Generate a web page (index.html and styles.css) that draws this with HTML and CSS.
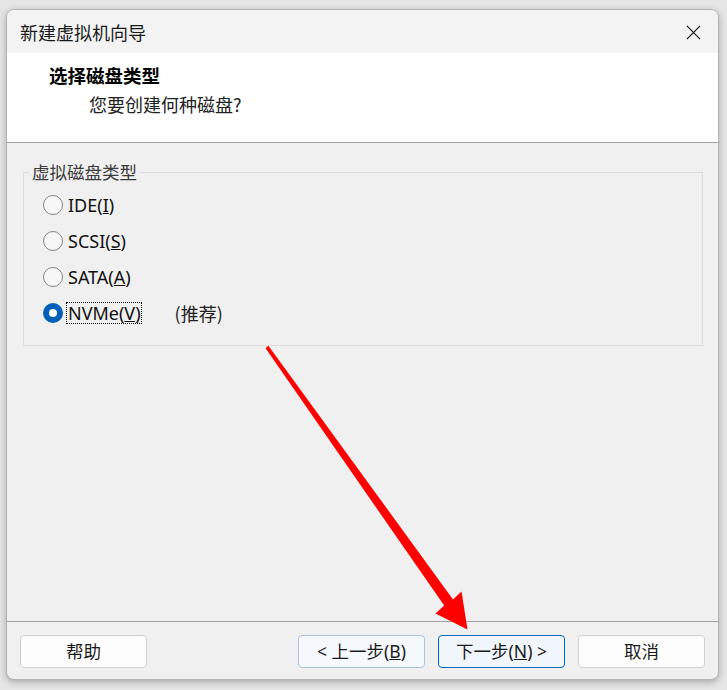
FILE: index.html
```html
<!DOCTYPE html>
<html lang="zh-CN">
<head>
<meta charset="utf-8">
<title>新建虚拟机向导</title>
<link rel="stylesheet" href="styles.css">
</head>
<body>
<div class="window">
  <div class="titlebar">
    <span class="title">新建虚拟机向导</span>
    <svg class="close" width="16" height="16" viewBox="0 0 16 16"><path d="M1 1 L15 15 M15 1 L1 15" stroke="#1a1a1a" stroke-width="1.3" fill="none"/></svg>
  </div>
  <div class="header">
    <div class="h-title">选择磁盘类型</div>
    <div class="h-sub">您要创建何种磁盘?</div>
  </div>
  <div class="main">
    <fieldset class="group">
      <legend>虚拟磁盘类型</legend>
      <div class="row"><span class="radio"></span><span class="lbl">IDE(<u>I</u>)</span></div>
      <div class="row"><span class="radio"></span><span class="lbl">SCSI(<u>S</u>)</span></div>
      <div class="row"><span class="radio"></span><span class="lbl">SATA(<u>A</u>)</span></div>
      <div class="row"><span class="radio checked"></span><span class="lbl focus">NVMe(<u>V</u>)</span><span class="rec">(推荐)</span></div>
    </fieldset>
  </div>
  <div class="footer">
    <button class="btn">帮助</button>
    <span class="spacer"></span>
    <button class="btn back">&lt; 上一步(<u>B</u>)</button>
    <button class="btn next">下一步(<u>N</u>) &gt;</button>
    <button class="btn">取消</button>
  </div>
  <svg class="arrow" width="727" height="690" viewBox="0 0 727 690">
    <polygon points="265.6,348.3 268.4,345.7 453,599.4 461.5,591.5 467.5,629.5 435.5,613.5 444.2,605.6" fill="#ff0000"/>
  </svg>
</div>
</body>
</html>
```
FILE: styles.css
```css
html, body {
  margin: 0;
  padding: 0;
}
body {
  background: #e6e6e6;
  width: 727px;
  height: 690px;
  font-family: "Noto Sans", "Noto Sans CJK SC", sans-serif;
  color: #1a1a1a;
}
.window {
  margin: 9px 0 0 6px;
  width: 711px;
  height: 669px;
  border: 1px solid #b3b3b3;
  border-radius: 8px;
  background: #f0f0f0;
  box-shadow: 0 2px 7px rgba(0, 0, 0, 0.28);
  overflow: hidden;
  display: flex;
  flex-direction: column;
}
.titlebar {
  height: 43px;
  background: #f3f3f3;
  display: flex;
  align-items: center;
  justify-content: space-between;
  padding: 0 17px 0 13px;
  flex: none;
}
.title {
  font-family: "Noto Sans CJK SC", sans-serif;
  font-size: 18px;
  line-height: 24px;
  color: #1a1a1a;
  margin-top: 1px;
}
.close {
  display: block;
  width: 15px;
  height: 15px;
  margin-top: 1px;
}
.header {
  box-sizing: border-box;
  background: #ffffff;
  border-bottom: 1px solid #a0a0a0;
  padding: 8px 0 0 42px;
  height: 90px;
  flex: none;
  font-family: "Noto Sans CJK SC", sans-serif;
  line-height: 29px;
}
.h-title {
  font-weight: bold;
  font-size: 18.5px;
  color: #000;
}
.h-sub {
  padding-left: 40px;
  font-size: 18px;
  color: #222;
}
.main {
  height: 478px;
  flex: none;
  padding: 0 15px 0 16px;
  box-sizing: border-box;
}
.group {
  margin: 19px 0 0 0;
  padding: 5px 0 14px 19px;
  border: 1px solid #dcdcdc;
  min-width: 0;
}
.group legend {
  margin-left: -14px;
  padding: 0 3px;
  font-family: "Noto Sans CJK SC", sans-serif;
  font-size: 17.5px;
  line-height: 20px;
  color: #3c3c3c;
}
.row {
  height: 36px;
  display: flex;
  align-items: center;
  font-size: 18px;
}
.radio {
  width: 20px;
  height: 20px;
  box-sizing: border-box;
  border: 1px solid #858585;
  border-radius: 50%;
  background: #f7f7f7;
  flex: none;
  margin-right: 5px;
}
.radio.checked {
  border: 6px solid #005fb8;
  background: #ffffff;
}
.lbl {
  line-height: 20px;
  color: #111;
}
.focus {
  outline: 1px dotted #000;
  outline-offset: 0;
  margin-left: -1px;
  padding: 0 0 0 1px;
}
.rec {
  margin-left: 34px;
  font-family: "Noto Sans CJK SC", sans-serif;
  font-size: 18px;
  line-height: 20px;
  color: #222;
}
.footer {
  flex: 1;
  border-top: 1px solid #a0a0a0;
  display: flex;
  align-items: flex-start;
  padding: 13px 13px 0 13px;
  gap: 13px;
}
.spacer {
  flex: 1;
}
.btn {
  width: 127px;
  height: 33px;
  box-sizing: border-box;
  border: 1px solid #d0d0d0;
  border-radius: 4px;
  background: #fdfdfd;
  font-family: "Noto Sans", "Noto Sans CJK SC", sans-serif;
  font-size: 17.5px;
  color: #1a1a1a;
  padding: 0;
  line-height: 31px;
}
.btn.back {
  background: #f5f9fd;
  border-color: #a9c4dc;
}
.btn.next {
  background: #f0f6fc;
  border-color: #0067c0;
}
.arrow {
  position: absolute;
  left: 0;
  top: 0;
  pointer-events: none;
}
```
